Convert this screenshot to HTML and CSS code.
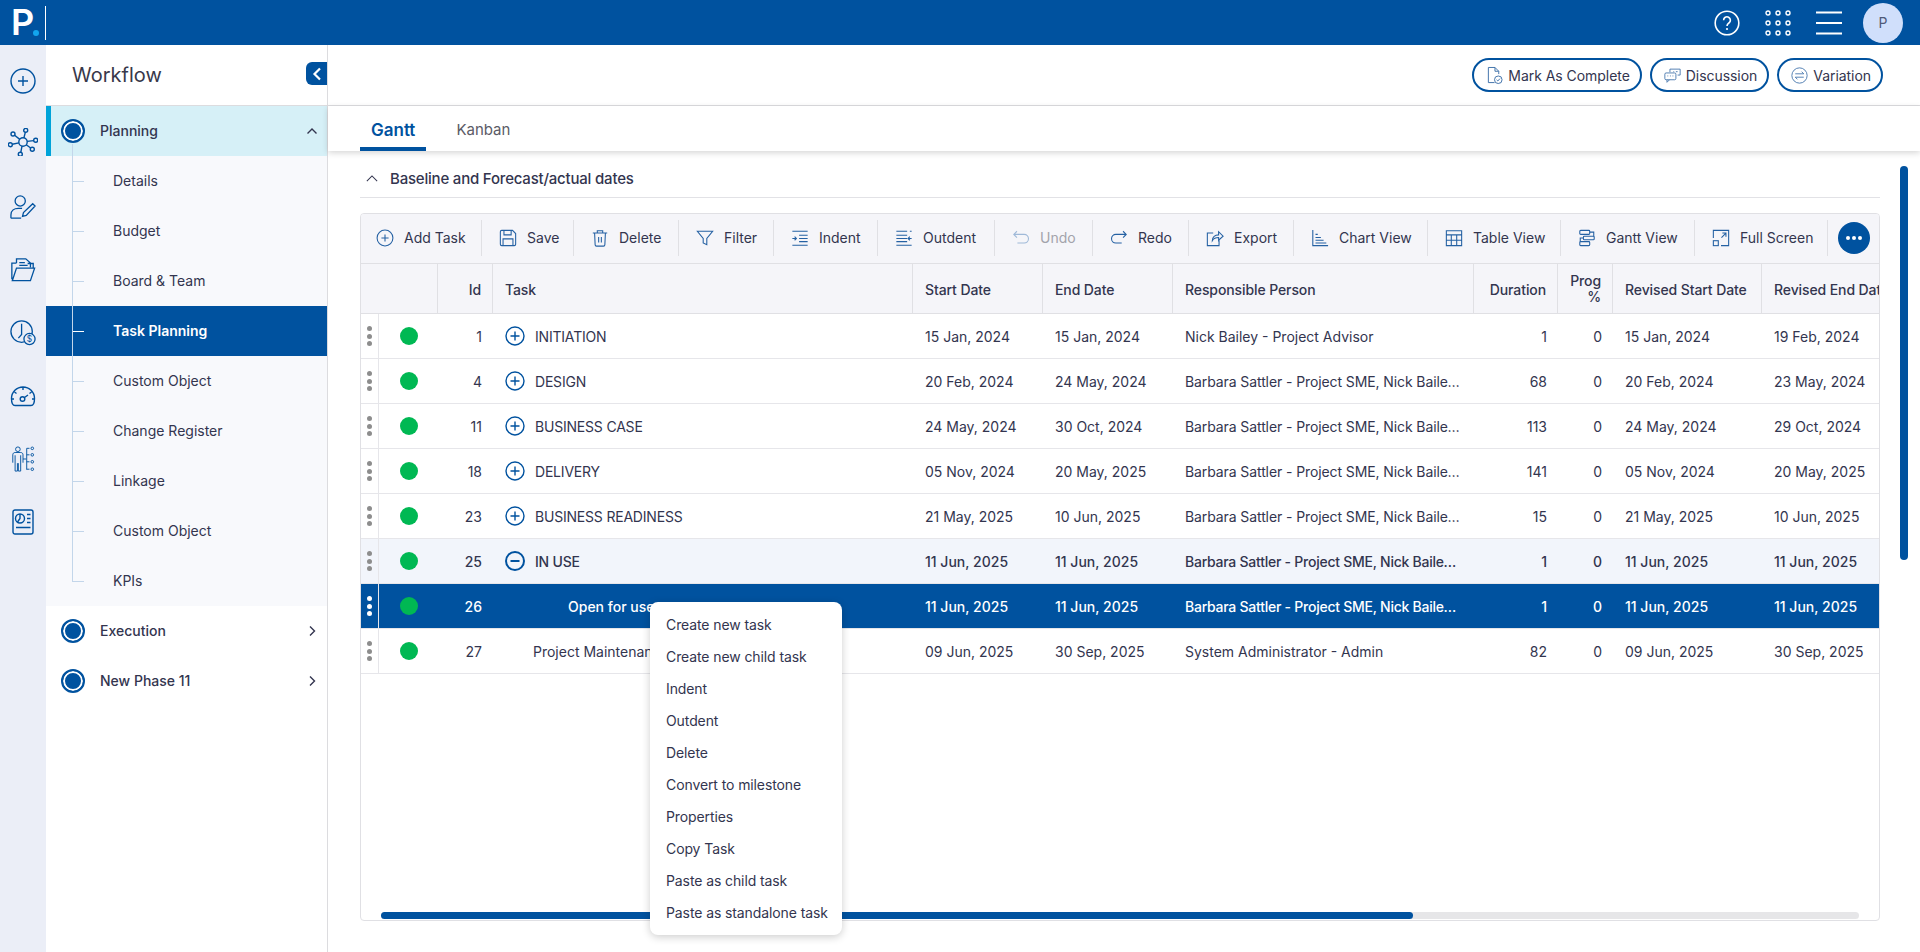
FILE: index.html
```html
<!DOCTYPE html>
<html lang="en">
<head>
<meta charset="utf-8">
<title>Workflow - Task Planning</title>
<link rel="stylesheet" href="styles.css">
</head>
<body>
<header class="topbar">
  <div class="logo"><span class="logo-p">P</span><span class="logo-dot"></span></div>
  <div class="top-actions">
    <svg class="top-help" viewBox="0 0 26 26"><circle cx="13" cy="13" r="11.8"/><path d="M9.6 10.2a3.4 3.4 0 1 1 5.3 2.8c-1.2.8-1.9 1.4-1.9 2.9"/><circle class="fill" cx="13" cy="19" r="1.1"/></svg>
    <svg class="top-grid" viewBox="0 0 26 26"><circle cx="3" cy="3" r="2"/><circle cx="13" cy="3" r="2"/><circle cx="23" cy="3" r="2"/><circle cx="3" cy="13" r="2"/><circle cx="13" cy="13" r="2"/><circle cx="23" cy="13" r="2"/><circle cx="3" cy="23" r="2"/><circle cx="13" cy="23" r="2"/><circle cx="23" cy="23" r="2"/></svg>
    <svg class="top-menu" viewBox="0 0 26 24"><path d="M0 1.5h26M0 12h26M0 22.500h26"/></svg>
    <div class="avatar">P</div>
  </div>
</header>
<div class="shell">
  <nav class="rail">
    <svg class="rail-icon first" viewBox="0 0 26 26"><circle cx="13" cy="13" r="12"/><path d="M13 8v10M8 13h10"/></svg>
    <svg class="rail-icon net" viewBox="0 0 30 28"><circle cx="15" cy="14" r="4.200"/><circle cx="5" cy="6" r="2"/><circle cx="17.700" cy="2.300" r="2"/><circle cx="27.700" cy="12.300" r="2"/><circle cx="24.300" cy="21.300" r="2"/><circle cx="12.300" cy="26.300" r="2"/><circle cx="2.300" cy="16.700" r="2"/><path d="M6.600 7.300l5.200 4.100M17.300 4.300l-1.400 5.600M25.700 12.600l-6.600.8M22.700 20l-4.500-3.300M12.800 24.300l1.200-6.200M4.300 16.300l6.600-1.400"/></svg>
    <svg class="rail-icon" viewBox="0 0 28 28"><circle cx="11" cy="7.500" r="5.500"/><path d="M1 26v-3.500C1 18 4.500 15.500 9 15.500h4M1 26h11M24.500 10.500l2.500 2.500-9.500 10-4 1 1-4z"/></svg>
    <svg class="rail-icon" viewBox="0 0 28 26"><path d="M2 23V5.500h5M7 5.500V1h10l5 4.500V10M10 5h6M10 8h9M2.500 24.500h19.500L26.500 11H7L2.500 24.500zM19 6h6v5"/></svg>
    <svg class="rail-icon" viewBox="0 0 28 28"><circle cx="12.500" cy="12.500" r="11.500"/><path d="M12.500 4v11.500l-3.500 4"/><circle class="paper" cx="21" cy="20.500" r="6"/><text class="dollar" x="21" y="24">$</text></svg>
    <svg class="rail-icon" viewBox="0 0 26 22"><path d="M1.500 13.500a11.500 11.500 0 0 1 23 0c0 3.500-.8 7-3.500 7H5c-2.700 0-3.500-3.500-3.500-7zM13 2v3M4.500 7l2 1.500M21.500 7l-2 1.500M2 14h2M22 14h2M14.500 12.500l3.500-2.500"/><circle cx="12.500" cy="14" r="2.300"/></svg>
    <svg class="rail-icon thin" viewBox="0 0 26 28"><circle cx="7.500" cy="3.500" r="2.500"/><path d="M2 18V9.500c0-1.500 1-2.500 2.500-2.500h6c1.500 0 2.500 1 2.500 2.500V18M4.500 10v17h2.500v-8.500M10.500 10v17H8v-8.500M13 14h3.500M17 2.500v23M17 2.500h3M17 9.500h3M17 17h3M17 25h3"/><circle cx="23" cy="2.500" r="1.400"/><circle cx="23" cy="9.500" r="1.400"/><circle cx="23" cy="17" r="1.400"/><circle cx="23" cy="25" r="1.400"/></svg>
    <svg class="rail-icon" viewBox="0 0 22 26"><rect x="1" y="1" width="20" height="24" rx="2"/><circle cx="8" cy="9.500" r="4.500"/><path d="M8 5v4.500l-2.500 3.500M15 5.500h3.500M15 9.500h3.500M15 13.500h3.500M4 18.500h14.500"/></svg>
  </nav>
  <aside class="sidebar">
    <div class="side-head"><span class="side-title">Workflow</span>
      <button class="collapse" aria-label="Collapse"><svg viewBox="0 0 12 16"><path d="M9 2.500L3.500 8 9 13.500"/></svg></button>
    </div>
    <div class="phase phase-open"><span class="phase-dot"></span><span class="phase-name">Planning</span>
      <svg class="chev" viewBox="0 0 12 8"><path d="M1.500 6.500L6 2l4.500 4.500"/></svg></div>
    <ul class="sub">
      <li><span>Details</span></li>
      <li><span>Budget</span></li>
      <li><span>Board &amp; Team</span></li>
      <li class="sub-active"><span>Task Planning</span></li>
      <li><span>Custom Object</span></li>
      <li><span>Change Register</span></li>
      <li><span>Linkage</span></li>
      <li><span>Custom Object</span></li>
      <li><span>KPIs</span></li>
    </ul>
    <div class="phase"><span class="phase-dot"></span><span class="phase-name">Execution</span>
      <svg class="chev chev-r" viewBox="0 0 8 12"><path d="M2 1.500L6.500 6 2 10.500"/></svg></div>
    <div class="phase"><span class="phase-dot"></span><span class="phase-name">New Phase 11</span>
      <svg class="chev chev-r" viewBox="0 0 8 12"><path d="M2 1.500L6.500 6 2 10.500"/></svg></div>
  </aside>
  <main class="main">
    <div class="actions">
      <button class="pill"><svg viewBox="0 0 18 20"><path d="M9 17.500H2.500V1.500h7l4 4v3M9.500 1.500v4h4"/><circle cx="13" cy="14.500" r="4"/><path d="M11.200 14.500l1.300 1.300 2.300-2.500"/></svg>Mark As Complete</button>
      <button class="pill"><svg viewBox="0 0 20 18"><path d="M7 5V1.500h12v7h-3M14 4.500h2M11 4.500h1"/><rect x="1" y="6" width="13" height="8" rx="1.500"/><path d="M4 9.500h1M7 9.500h1M10 9.500h1M3.500 14v3l3-3"/></svg>Discussion</button>
      <button class="pill"><svg viewBox="0 0 20 20"><circle cx="10" cy="10" r="9"/><path d="M5 8h10l-2.500-2.500M15 12H5l2.500 2.500"/></svg>Variation</button>
    </div>
    <div class="tabs">
      <a class="tab tab-on">Gantt</a>
      <a class="tab">Kanban</a>
    </div>
    <section class="content">
      <div class="section-title"><svg viewBox="0 0 14 8"><path d="M1 7l6-6 6 6"/></svg>Baseline and Forecast/actual dates</div>
      <div class="grid-box">
        <div class="toolbar">
          <div class="tool"><svg viewBox="0 0 20 20"><circle cx="10" cy="10" r="8.800"/><path d="M10 6v8M6 10h8"/></svg>Add Task</div>
          <div class="tool"><svg viewBox="0 0 20 20"><path d="M1.500 3c0-1 .5-1.500 1.500-1.500h12l3.500 3.500v12c0 1-.5 1.500-1.500 1.500H3c-1 0-1.500-.5-1.500-1.500zM5.500 1.500v5h8v-5M4.500 18.500v-7.500h11v7.500"/></svg>Save</div>
          <div class="tool"><svg viewBox="0 0 20 20"><path d="M2 4.500h16M7 4.500V2h6v2.500M4 4.500l.6 13c0 1 .5 1.500 1.500 1.500h7.800c1 0 1.500-.5 1.500-1.500l.6-13M8.500 9v6M11.500 9v6"/></svg>Delete</div>
          <div class="tool"><svg viewBox="0 0 20 20"><path d="M1.500 2.500h17l-6.500 8v7l-4-2v-5z"/></svg>Filter</div>
          <div class="tool"><svg viewBox="0 0 20 20"><path d="M1.500 2.500h17M9 7h9.500M9 10.500h9.500M9 14h9.500M1.500 18h17M1.500 10.500h4M4 8.500l2 2-2 2"/></svg>Indent</div>
          <div class="tool"><svg viewBox="0 0 20 20"><path d="M1.500 2.500h12M1.500 7h12M1.500 10.500h12M1.500 14h12M1.500 18h17M14.500 10.500h4M16.500 8.500l-2 2 2 2M16.500 2.500h2"/></svg>Outdent</div>
          <div class="tool tool-off"><svg viewBox="0 0 20 20"><path d="M5.500 2.500L2 6l3.500 3.500M2 6h11.500a4.800 4.800 0 0 1 0 9.600H6"/></svg>Undo</div>
          <div class="tool"><svg viewBox="0 0 20 20"><path d="M14.500 2.500L18 6l-3.500 3.500M18 6H6.500a4.800 4.800 0 0 0 0 9.600H13"/></svg>Redo</div>
          <div class="tool"><svg viewBox="0 0 20 20"><path d="M8 4.500H1.500v14h13V12M7 13c0-4 3-6.500 7-6.500V3l5 5-5 4.500V9.500c-3 0-5.500 1-7 3.500z"/></svg>Export</div>
          <div class="tool"><svg viewBox="0 0 20 20"><path d="M2 1v17.500h17M5 6h2.500M5 9.500h6M5 12.500h9M5 15.500h12"/></svg>Chart View</div>
          <div class="tool"><svg viewBox="0 0 20 20"><path d="M1.500 2h17v16.500h-17zM1.500 6.500h17M1.500 12.500h17M7 6.500v12M13 6.500v12"/></svg>Table View</div>
          <div class="tool"><svg viewBox="0 0 20 20"><rect x="2" y="1.500" width="11" height="4.500" rx="1"/><rect x="6" y="8" width="12" height="4" rx="1"/><rect x="2" y="14" width="11" height="4.500" rx="1"/><path d="M13 3.500h4.500V8M6 10H2.500v4"/></svg>Gantt View</div>
          <div class="tool"><svg viewBox="0 0 20 20"><path d="M1.500 10V1.500h17v17H10M10.500 9.500l5-5M11.500 4.500h4v4"/><rect x="1.500" y="13" width="5.500" height="5.500"/></svg>Full Screen</div>
          <button class="more" aria-label="More"><span></span><span></span><span></span></button>
        </div>
        <div class="table-wrap">
          <table class="grid">
            <colgroup><col class="c-h"><col class="c-s"><col class="c-i"><col class="c-t"><col class="c-d"><col class="c-d"><col class="c-r"><col class="c-u"><col class="c-p"><col class="c-a"><col class="c-b"></colgroup>
            <thead><tr><th colspan="2"></th><th class="num">Id</th><th>Task</th><th>Start Date</th><th>End Date</th><th>Responsible Person</th><th class="num">Duration</th><th class="num prog">Prog %</th><th>Revised Start Date</th><th>Revised End Date</th></tr></thead>
            <tbody>
              <tr><td class="handle"><i></i><i></i><i></i></td><td><span class="status"></span></td><td class="num">1</td><td><div class="task"><svg class="tree" viewBox="0 0 20 20"><circle cx="10" cy="10" r="9"/><path d="M10 5.500v9M5.500 10h9"/></svg>INITIATION</div></td><td>15 Jan, 2024</td><td>15 Jan, 2024</td><td>Nick Bailey - Project Advisor</td><td class="num">1</td><td class="num">0</td><td>15 Jan, 2024</td><td>19 Feb, 2024</td></tr>
              <tr><td class="handle"><i></i><i></i><i></i></td><td><span class="status"></span></td><td class="num">4</td><td><div class="task"><svg class="tree" viewBox="0 0 20 20"><circle cx="10" cy="10" r="9"/><path d="M10 5.500v9M5.500 10h9"/></svg>DESIGN</div></td><td>20 Feb, 2024</td><td>24 May, 2024</td><td class="clip">Barbara Sattler - Project SME, Nick Bailey - Project Advisor</td><td class="num">68</td><td class="num">0</td><td>20 Feb, 2024</td><td>23 May, 2024</td></tr>
              <tr><td class="handle"><i></i><i></i><i></i></td><td><span class="status"></span></td><td class="num">11</td><td><div class="task"><svg class="tree" viewBox="0 0 20 20"><circle cx="10" cy="10" r="9"/><path d="M10 5.500v9M5.500 10h9"/></svg>BUSINESS CASE</div></td><td>24 May, 2024</td><td>30 Oct, 2024</td><td class="clip">Barbara Sattler - Project SME, Nick Bailey - Project Advisor</td><td class="num">113</td><td class="num">0</td><td>24 May, 2024</td><td>29 Oct, 2024</td></tr>
              <tr><td class="handle"><i></i><i></i><i></i></td><td><span class="status"></span></td><td class="num">18</td><td><div class="task"><svg class="tree" viewBox="0 0 20 20"><circle cx="10" cy="10" r="9"/><path d="M10 5.500v9M5.500 10h9"/></svg>DELIVERY</div></td><td>05 Nov, 2024</td><td>20 May, 2025</td><td class="clip">Barbara Sattler - Project SME, Nick Bailey - Project Advisor</td><td class="num">141</td><td class="num">0</td><td>05 Nov, 2024</td><td>20 May, 2025</td></tr>
              <tr><td class="handle"><i></i><i></i><i></i></td><td><span class="status"></span></td><td class="num">23</td><td><div class="task"><svg class="tree" viewBox="0 0 20 20"><circle cx="10" cy="10" r="9"/><path d="M10 5.500v9M5.500 10h9"/></svg>BUSINESS READINESS</div></td><td>21 May, 2025</td><td>10 Jun, 2025</td><td class="clip">Barbara Sattler - Project SME, Nick Bailey - Project Advisor</td><td class="num">15</td><td class="num">0</td><td>21 May, 2025</td><td>10 Jun, 2025</td></tr>
              <tr class="row-parent"><td class="handle"><i></i><i></i><i></i></td><td><span class="status"></span></td><td class="num">25</td><td><div class="task"><svg class="tree tree-open" viewBox="0 0 20 20"><circle cx="10" cy="10" r="9"/><path d="M5.500 10h9"/></svg>IN USE</div></td><td>11 Jun, 2025</td><td>11 Jun, 2025</td><td class="clip">Barbara Sattler - Project SME, Nick Bailey - Project Advisor</td><td class="num">1</td><td class="num">0</td><td>11 Jun, 2025</td><td>11 Jun, 2025</td></tr>
              <tr class="row-selected"><td class="handle"><i></i><i></i><i></i></td><td><span class="status"></span></td><td class="num">26</td><td><div class="task task-deep">Open for use</div></td><td>11 Jun, 2025</td><td>11 Jun, 2025</td><td class="clip">Barbara Sattler - Project SME, Nick Bailey - Project Advisor</td><td class="num">1</td><td class="num">0</td><td>11 Jun, 2025</td><td>11 Jun, 2025</td></tr>
              <tr><td class="handle"><i></i><i></i><i></i></td><td><span class="status"></span></td><td class="num">27</td><td><div class="task task-child">Project Maintenance</div></td><td>09 Jun, 2025</td><td>30 Sep, 2025</td><td>System Administrator - Admin</td><td class="num">82</td><td class="num">0</td><td>09 Jun, 2025</td><td>30 Sep, 2025</td></tr>
            </tbody>
          </table>
        </div>
        <div class="hscroll"><div class="hthumb"></div></div>
      </div>
      <div class="vscroll"></div>
    </section>
  </main>
</div>
<ul class="ctx">
  <li>Create new task</li>
  <li>Create new child task</li>
  <li>Indent</li>
  <li>Outdent</li>
  <li>Delete</li>
  <li>Convert to milestone</li>
  <li>Properties</li>
  <li>Copy Task</li>
  <li>Paste as child task</li>
  <li>Paste as standalone task</li>
</ul>
</body>
</html>
```
FILE: styles.css
```css
* { box-sizing: border-box; }
html, body { height: 100%; }
body {
  margin: 0;
  height: 100vh;
  overflow: hidden;
  display: flex;
  flex-direction: column;
  font-family: Inter, "Noto Sans", "Liberation Sans", sans-serif;
  font-size: 14px;
  color: #33354f;
  background: #fff;
}
svg { fill: none; stroke: #00529f; stroke-width: 1.3; flex: none; }
ul { list-style: none; margin: 0; padding: 0; }
button { font: inherit; color: inherit; background: none; border: 0; padding: 0; }

.topbar { height: 45px; flex: none; background: #00529f; display: flex; align-items: center; justify-content: space-between; }
.logo { width: 46px; height: 34px; border-right: 1px solid #fff; display: flex; align-items: flex-end; padding-left: 11px; }
.logo-p { color: #fff; font-weight: 600; font-size: 36px; line-height: 36px; }
.logo-dot { width: 6px; height: 6px; border-radius: 50%; background: #12a5ee; margin-left: -1px; margin-bottom: 4px; }
.top-actions { display: flex; align-items: center; padding-right: 17px; }
.top-actions svg { stroke: #fff; }
.top-help { width: 26px; height: 26px; stroke-width: 1.6; margin-right: 25px; }
.top-help .fill { fill: #fff; stroke: none; }
.top-grid { width: 26px; height: 26px; stroke-width: 1.4; margin-right: 25px; }
.top-menu { width: 26px; height: 24px; stroke-width: 2; margin-right: 21px; }
.avatar { width: 40px; height: 40px; border-radius: 50%; background: #d0dffb; color: #4f5a78; display: flex; align-items: center; justify-content: center; font-size: 14px; }

.shell { flex: 1; display: flex; min-height: 0; }
.rail { width: 46px; flex: none; background: #ebeef7; display: flex; flex-direction: column; align-items: center; padding-top: 23px; }
.rail-icon { width: 26px; height: 26px; margin-bottom: 37px; stroke-width: 1.4; }
.rail-icon.first { margin-bottom: 34px; }
.rail-icon.net { width: 30px; height: 28px; margin-bottom: 38px; }
.rail-icon.thin { stroke-width: 1; }
.paper { fill: #ebeef7; }
.dollar { fill: #00529f; stroke: none; font-size: 9px; text-anchor: middle; }

.sidebar { width: 282px; flex: none; border-right: 1px solid #dcdcdf; display: flex; flex-direction: column; }
.side-head { height: 61px; flex: none; border-bottom: 1px solid #dcdcdf; display: flex; align-items: center; justify-content: space-between; padding-left: 26px; }
.side-title { font-size: 20px; color: #38384a; }
.collapse { width: 21px; height: 23px; background: #00529f; border-radius: 6px 0 0 6px; display: flex; align-items: center; justify-content: center; margin-top: -3px; }
.collapse svg { width: 12px; height: 16px; stroke: #fff; stroke-width: 2.2; }
.phase { height: 50px; flex: none; display: flex; align-items: center; padding-left: 15px; padding-right: 9px; }
.phase-open { background: #d6f0f7; border-left: 5px solid #00a3d9; padding-left: 10px; }
.phase-dot { width: 24px; height: 24px; border-radius: 50%; border: 2px solid #00529f; background: #00529f; box-shadow: inset 0 0 0 2px #fff; flex: none; }
.phase-name { font-weight: 500; font-size: 14px; margin-left: 15px; flex: 1; padding-bottom: 2px; }
.chev { width: 12px; height: 8px; stroke: #33354f; stroke-width: 1.4; }
.chev-r { width: 8px; height: 12px; margin-right: 2px; }
.sub { position: relative; background: #f8f9fc; }
.sub::before { content: ""; position: absolute; z-index: 1; left: 26px; top: -12px; height: 438px; width: 1px; background: #c3d6ea; }
.sub li { height: 50px; display: flex; align-items: center; padding-left: 67px; padding-bottom: 2px; position: relative; }
.sub li::before { content: ""; position: absolute; left: 26px; top: 25px; width: 12px; height: 1px; background: #c3d6ea; }
.sub li.sub-active { background: #00529f; color: #fff; font-weight: 600; }
.sub li.sub-active::before { background: #fff; }

.main { flex: 1; min-width: 0; display: flex; flex-direction: column; position: relative; }
.actions { height: 61px; flex: none; border-bottom: 1px solid #dcdcdf; display: flex; align-items: center; justify-content: flex-end; gap: 8px; padding: 0 37px 0 0; }
.pill { height: 34px; border: 2px solid #00529f; border-radius: 17px; display: flex; align-items: center; gap: 5px; padding: 0 10px 0 12px; font-size: 14px; letter-spacing: -0.05px; white-space: nowrap; }
.pill svg { width: 17px; height: 19px; stroke-width: 1; stroke: #3b6ea8; }
.tabs { height: 45px; flex: none; display: flex; padding-left: 32px; box-shadow: 0 2px 6px rgba(0,0,0,.16); position: relative; }
.tab { padding: 0 12px; display: flex; align-items: center; color: #5b5b66; height: 45px; font-size: 15px; margin-left: 18px; padding-top: 2px; }
.tab-on { margin-left: 0; padding: 0 11px; color: #00529f; font-weight: 600; font-size: 17px; border-bottom: 4px solid #00529f; padding-top: 6px; }
.content { flex: 1; min-height: 0; padding: 0 40px 31px 32px; display: flex; flex-direction: column; }
.section-title { height: 47px; flex: none; border-bottom: 1px solid #e2e2e6; display: flex; align-items: center; gap: 12px; padding: 8px 0 0 6px; font-weight: 500; font-size: 15px; letter-spacing: -0.2px; }
.section-title svg { width: 12px; height: 7px; stroke: #33354f; stroke-width: 1.2; }
.grid-box { flex: 1; min-height: 0; margin-top: 15px; border: 1px solid #e0e0e4; border-radius: 4px; display: flex; flex-direction: column; overflow: hidden; }
.toolbar { height: 50px; flex: none; background: #f5f5f9; border-bottom: 1px solid #e0e0e4; padding-bottom: 2px; display: grid; grid-template-columns: 121px 92px 105px 95px 104px 117px 98px 96px 105px 134px 133px 134px 133px auto; align-items: center; }
.tool { height: 36px; display: flex; align-items: center; gap: 10px; padding-left: 17px; border-right: 1px solid #e0e0e4; white-space: nowrap; }
.tool:first-child { padding-left: 15px; }
.tool svg { width: 18px; height: 18px; stroke-width: 1.2; stroke: #2561a3; }
.tool-off { color: #a3a3ab; }
.tool-off svg { stroke: #9fb9d8; }
.more { width: 32px; height: 32px; border-radius: 50%; background: #00529f; margin-left: 10px; display: flex; align-items: center; justify-content: center; gap: 2px; }
.more span { width: 4px; height: 4px; border-radius: 50%; background: #fff; }

.table-wrap { flex: 1; min-height: 0; overflow: hidden; }
.grid { width: 1561px; table-layout: fixed; border-collapse: separate; border-spacing: 0; }
.c-h { width: 18px; } .c-s { width: 59px; } .c-i { width: 55px; } .c-t { width: 420px; } .c-d { width: 130px; }
.c-r { width: 301px; } .c-u { width: 84px; } .c-p { width: 55px; } .c-a { width: 149px; } .c-b { width: 160px; }
.grid th { height: 50px; background: #f5f5f9; font-weight: 500; text-align: left; padding: 2px 11px 0 12px; border-right: 1px solid #e0e0e4; border-bottom: 1px solid #e0e0e4; white-space: nowrap; line-height: 16px; letter-spacing: -0.1px; }
.grid th:last-child { border-right: 0; }
.grid th.prog { white-space: normal; padding-top: 0; }
.grid td { height: 45px; padding: 0 11px 0 12px; border-bottom: 1px solid #e6e6ea; white-space: nowrap; overflow: hidden; text-overflow: ellipsis; }
.grid td.clip { max-width: 0; letter-spacing: -0.1px; }
.row-parent td.clip, .row-selected td.clip { letter-spacing: -0.25px; }
.grid .num { text-align: right; }
.grid td.handle { padding: 0; border-right: 1px solid #e6e6ea; text-align: center; line-height: 0; }
.handle i { display: block; width: 5px; height: 5px; border-radius: 50%; background: #8d8d8d; margin: 0 auto 2.500px; }
.handle i:last-child { margin-bottom: 0; }
.status { display: block; width: 18px; height: 18px; border-radius: 50%; background: #00b853; margin-left: 9px; margin-top: -1px; }
.task { display: flex; align-items: center; gap: 10px; letter-spacing: -0.2px; }
.tree { width: 20px; height: 20px; stroke-width: 1.4; }
.tree-open { stroke-width: 2; }
.task-deep { padding-left: 63px; letter-spacing: 0; }
.task-child { padding-left: 28px; letter-spacing: 0; }
.row-parent td { background: #f2f5fb; font-weight: 500; }
.row-selected td { background: #00529f; color: #fff; font-weight: 500; }
.row-selected .handle i { background: #fff; }
.hscroll { height: 7px; flex: none; margin: 0 20px 1px 20px; background: #e6e6e8; border-radius: 4px; }
.hthumb { width: 69.800%; height: 7px; background: #00529f; border-radius: 4px; }
.vscroll { position: absolute; right: 12px; top: 121px; width: 8px; height: 394px; border-radius: 4px; background: #00529f; }

.ctx { position: absolute; left: 650px; top: 602px; width: 192px; height: 333px; background: #fff; border-radius: 8px; box-shadow: 0 2px 8px rgba(0,0,0,.2); padding: 6px 16px; letter-spacing: -0.1px; }
.ctx li { height: 32px; display: flex; align-items: center; white-space: nowrap; }
```
